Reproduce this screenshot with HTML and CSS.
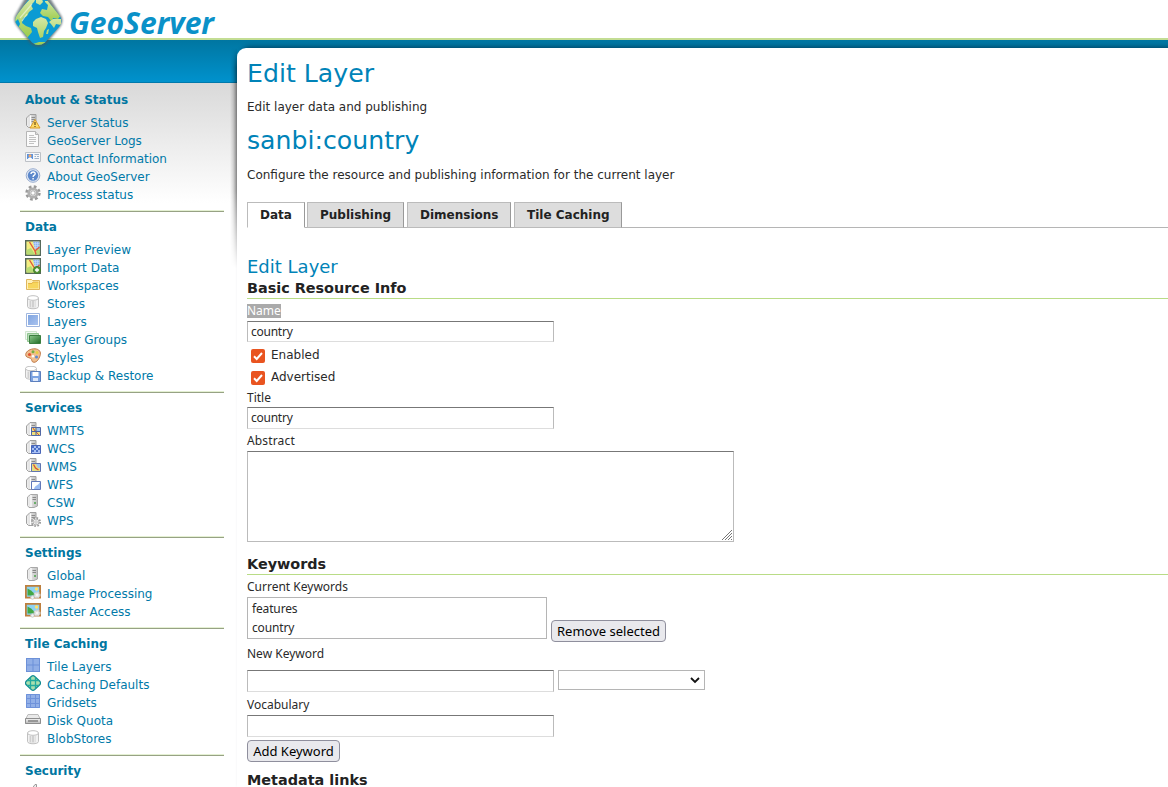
FILE: index.html
```html
<!DOCTYPE html>
<html lang="en">
<head>
<meta charset="utf-8">
<title>GeoServer: Edit Layer</title>
<link rel="stylesheet" href="styles.css">
</head>
<body>
<svg class="defs" width="0" height="0" aria-hidden="true">
  <defs>
    <linearGradient id="steel"><stop offset="0" stop-color="#f0f0f0"/><stop offset="1" stop-color="#c2c2c2"/></linearGradient>
    <linearGradient id="blue" x2="1" y2="1"><stop offset="0" stop-color="#7fa4e0"/><stop offset="1" stop-color="#a9c3ef"/></linearGradient>
    <linearGradient id="green" x2="1" y2="1"><stop offset="0" stop-color="#8cc98c"/><stop offset="1" stop-color="#1f6b25"/></linearGradient>
    <linearGradient id="silver" x2="0" y2="1"><stop offset="0" stop-color="#f4f4f4"/><stop offset="1" stop-color="#b8b8b8"/></linearGradient>
    <linearGradient id="land" x2="0" y2="1"><stop offset="0" stop-color="#d5e8a6"/><stop offset="1" stop-color="#9bcb4b"/></linearGradient>
    <symbol id="server" viewBox="0 0 16 16"><path d="M1.500 4 5 .500h6v11L8 13.500H3.500l-2-2z" fill="url(#steel)" stroke="#a0a0a0"/><path d="M5.500 1.500v11.500" stroke="#fff" stroke-width="1.200"/><path d="M6.500 3.500H10M6.500 5.500H10M6.500 7.500H10" stroke="#8d8d8d"/></symbol>
    <symbol id="server-status" viewBox="0 0 16 16"><use href="#server"/><path d="m10 5.500 5 8.500H5z" fill="#ffdc69" stroke="#d99c2b" stroke-linejoin="round"/><path d="M10 8v3M10 12v1" stroke="#6b4a12" stroke-width="1.200"/></symbol>
    <symbol id="page" viewBox="0 0 16 16"><path d="M1.500.5h9l3 3v12h-12z" fill="#fbfbfb" stroke="#b5b5b5"/><path d="M10.500.5v3h3" fill="#ddd" stroke="#b5b5b5"/><path d="M4 4.500h5M4 6.500h7M4 8.500h7M4 10.500h7M4 12.500h5" stroke="#c2c2c2"/></symbol>
    <symbol id="card" viewBox="0 0 16 16"><path d="M.5 3.500h15v9H.5z" fill="#f5f7fa" stroke="#bdc1c6"/><path d="M2 5h6v5H2z" fill="#5b93dd"/><circle cx="5" cy="6.800" r="1.500" fill="#f4a868"/><path d="M3 10c0-2 4-2 4 0z" fill="#fff"/><path d="M9.500 5.500H14M9.500 7.500H11M12 7.500h2M9.500 9.500H14" stroke="#9fb3c9"/></symbol>
    <symbol id="help" viewBox="0 0 16 16"><circle cx="8" cy="7.500" r="6.800" fill="#dce5f3" stroke="#9aaed0"/><circle cx="8" cy="7.500" r="5.200" fill="#5c88cb"/><path d="M6 6c0-3 4.500-2.500 4.200 0C10 7.300 8.100 7 8.100 9M8.100 10v1.500" fill="none" stroke="#fff" stroke-width="1.400"/></symbol>
    <symbol id="gear" viewBox="0 0 16 16"><circle cx="8" cy="8" r="6.200" fill="none" stroke="#999" stroke-width="3" stroke-dasharray="2.600 2.270"/><circle cx="8" cy="8" r="4.300" fill="#eee" stroke="#b0b0b0" stroke-width="2.600"/><circle cx="8" cy="8" r="2.200" fill="#fff" stroke="#999" stroke-width=".8"/></symbol>
    <symbol id="map" viewBox="0 0 16 16"><path d="M.7.700h14.600v14.600H.7z" fill="#f3ee82" stroke="#56695b" stroke-width="1.400"/><path d="M8 1.500h6.500v8H10z" fill="#8db4ee"/><path d="M1.500 10 6 8l4 6.500H1.500zM10 11l4.500-2v5.500H11z" fill="#b8dc73"/><path d="M10.500 2v7M12.500 2v7M8 3.500h6.500M9 5.500h5.500M9 7.500h5.500" stroke="#c6dafa" stroke-width=".6"/><path d="m4.500 2 5.500 9 1 3.500M10 11l4.500-4" fill="none" stroke="#e05a3c" stroke-width="1.400"/></symbol>
    <symbol id="map-add" viewBox="0 0 16 16"><use href="#map"/><circle cx="12" cy="12" r="3.500" fill="#5d9b3c" stroke="#3f7b2b"/><path d="M12 10v4M10 12h4" stroke="#fff" stroke-width="1.300"/></symbol>
    <symbol id="folder" viewBox="0 0 16 16"><path d="M1.500 12.500v-10h5l1 1h7v9z" fill="#fff1b8" stroke="#dfb65c"/><path d="M3 11.500v-5h4l1-1.500h5.500v6.500z" fill="#f7d65c"/><path d="M3 6.500h4L8 5h5.500" fill="none" stroke="#e0a93a" stroke-width=".8"/></symbol>
    <symbol id="store" viewBox="0 0 16 16"><path d="M2.500 3v8.500c0 3 11 3 11 0V3" fill="#f2f2f2" stroke="#c0c0c0"/><ellipse cx="8" cy="3" rx="5.500" ry="2.300" fill="#fff" stroke="#c0c0c0"/><path d="M4.500 6v6.500h6V6z" fill="#d0d0d0"/><path d="M6.500 6v7M9.500 6v7" stroke="#e7e7e7"/></symbol>
    <symbol id="layer" viewBox="0 0 16 16"><path d="M1.500.5h13v13h-13z" fill="#fff" stroke="#9fb6df"/><path d="M3 2h10v10H3z" fill="url(#blue)"/></symbol>
    <symbol id="group" viewBox="0 0 16 16"><path d="M.5.500h11v8H.5z" fill="#f1f8f1" stroke="#cfe5cf"/><path d="M2.500 2.500h11v8h-11z" fill="#b8dcb8" stroke="#8fc48f"/><path d="M4.500 4.500h11v8h-11z" fill="url(#green)" stroke="#3c7f40"/></symbol>
    <symbol id="palette" viewBox="0 0 16 16"><path d="M.7 6.500C1 3 5.500.7 10 .8c4 .3 6.500 3 5 7-1 3-3 6.500-6 6.500s-1.500-3-3.500-4S.5 9.500.7 6.500z" fill="#f0bf8e" stroke="#c07b4b"/><circle cx="4.500" cy="6.500" r="1.600" fill="#e5542f"/><circle cx="8" cy="3.800" r="1.500" fill="#75b044"/><circle cx="12" cy="4.500" r="1.500" fill="#e9cf42"/><circle cx="11.500" cy="9" r="1.500" fill="#5d8ad0"/><circle cx="8" cy="8.300" r="1.200" fill="#fff"/></symbol>
    <symbol id="backup" viewBox="0 0 16 16"><use href="#store" x="-2" y="-.5"/><path d="M5.500 5.500h10v10h-10z" fill="#7ba3e2" stroke="#5c7fbd"/><path d="M7.500 6h6v4h-6z" fill="#fff"/><path d="M8 12h5v3H8z" fill="#dce7fa"/></symbol>
    <symbol id="wmts" viewBox="0 0 16 16"><use href="#server"/><path d="M6.500 5.500h9v8h-9z" fill="#f0df7a" stroke="#5268a5"/><path d="M11.500 6h3.500v3h-3.500z" fill="#9fc1ef"/><path d="m8 6 2 3 4 4" stroke="#e05a3c"/><path d="M11 6v7M7 9.500h8" stroke="#4862a0"/></symbol>
    <symbol id="wcs" viewBox="0 0 16 16"><use href="#server"/><path d="M6.500 5.500h9v8h-9z" fill="#a9c1f3" stroke="#4a66b8"/><path d="M7 6h2v2H7zM11 6h2v2h-2zM9 8h2v2H9zM13 8h2v2h-2zM7 10h2v2H7zM11 10h2v2h-2z" fill="#4c70c8"/></symbol>
    <symbol id="wms" viewBox="0 0 16 16"><use href="#server"/><path d="M6.500 5.500h9v8h-9z" fill="#e6df80" stroke="#6175b0"/><path d="M11 6h4v4h-2z" fill="#9fc1ef"/><path d="m8.500 6.500 2 3.500 3 2" fill="none" stroke="#dc4d32" stroke-width="1.300"/></symbol>
    <symbol id="wfs" viewBox="0 0 16 16"><use href="#server"/><path d="M6.500 5.500h9v8h-9z" fill="#fff" stroke="#6279b9"/><path d="M15 6v7H9c1-4 4-3 6-7z" fill="#9bbcf2"/></symbol>
    <symbol id="tower" viewBox="0 0 16 16"><path d="M2.500 3 5.500.500h7v11.500L9 13.500H4l-1.500-2z" fill="url(#steel)" stroke="#a8a8a8"/><path d="M6 1v12" stroke="#fff" stroke-width="1.200"/><path d="M7.500 3.500H11M7.500 5.500H11" stroke="#888"/><circle cx="10" cy="9" r="1" fill="#48a548"/></symbol>
    <symbol id="wps" viewBox="0 0 16 16"><use href="#server"/><circle cx="11" cy="10" r="4" fill="#fff" stroke="#999" stroke-width="2" stroke-dasharray="1.600 1.540"/><circle cx="11" cy="10" r="3" fill="#eee" stroke="#b3b3b3"/><circle cx="11" cy="10" r="1.200" fill="#fff" stroke="#aaa" stroke-width=".7"/></symbol>
    <symbol id="image" viewBox="0 0 16 16"><path d="M.9.900h14.200v11.700H.9z" fill="#8fd2f2" stroke="#bd7f3e" stroke-width="1.800"/><path d="M2.500 3.500V10.500h9L6 5.500z" fill="#42a745"/><circle cx="11.500" cy="4" r="1.700" fill="#ffe269"/><circle cx="12" cy="10" r="2.600" fill="#f4f4f4" stroke="#d0d0d0" stroke-width="2" stroke-dasharray="1.500 .6"/><circle cx="7.500" cy="12.500" r="1.700" fill="#f4f4f4" stroke="#ccc"/></symbol>
    <symbol id="tiles" viewBox="0 0 16 16"><path d="M1 0h14v14H1z" fill="#6d91d8"/><path d="M2 1h5.500v5.500H2zM8.500 1H14v5.500H8.500zM2 7.500h5.500V13H2zM8.500 7.500H14V13H8.500z" fill="#91afe7"/></symbol>
    <symbol id="caching" viewBox="0 0 16 16"><path d="M6.500 1.200q1.500-1 3 0L15 6.500q1 1.500 0 3L9.500 14.800q-1.500 1-3 0L1 9.500q-1-1.500 0-3z" fill="#a9dfae" stroke="#118b92" stroke-width="1.300"/><path d="M5.500 2.500v11M10.500 2.500v11M2 5.500h12M2 10.500h12" stroke="#21aa9f" stroke-width="1.300"/></symbol>
    <symbol id="grid" viewBox="0 0 16 16"><path d="M1 0h14v14H1z" fill="#91afe7"/><path d="M5.500 0v14M10.500 0v14M1 4.500h14M1 9.500h14M1.500.500h13v13h-13z" fill="none" stroke="#6f92da"/></symbol>
    <symbol id="disk" viewBox="0 0 16 16"><path d="M3 2.500h10l2.500 5v4H.5v-4z" fill="#e9e9e9" stroke="#bbb"/><path d="M.5 6.500h15v5H.5z" fill="url(#silver)" stroke="#8e8e8e"/><path d="M3 9h10" stroke="#888" stroke-width="1.600"/></symbol>
    <symbol id="key" viewBox="0 0 16 16"><path d="M7.500 8V4L10 .500h1.500V8z" fill="#eee" stroke="#999"/></symbol>
  </defs>
</svg>

<header class="header">
  <div class="brand">
    <svg class="globe" width="70" height="50" viewBox="0 0 70 50" aria-hidden="true">
      <defs>
        <clipPath id="globe-clip"><path d="M28 0 17 15q-4 6 1 11l14 16.500q6 5 13 0l14-15.500q5-6 0-12L47 0z"/></clipPath>
        <filter id="soft" x="-20%" y="-20%" width="140%" height="140%"><feGaussianBlur stdDeviation="1.100"/></filter>
      </defs>
      <path d="M25-2 16 14q-4 6 1 12l14 18q7 5 15 0l14-17q5-7 0-13L50-2z" fill="#4c5a5e" opacity=".75" filter="url(#soft)"/>
      <g clip-path="url(#globe-clip)">
        <path d="M10-2h54v50H10z" fill="#0b9bd3"/>
        <path d="M14 16 31-2h5l-2 4-3 3 2 4-4 3-2 4-4 2-1 5 4 3 5 2 1 4-5 6-5-2-8-10z" fill="url(#land)"/>
        <path d="m20 18 12-14M22 21l5-7" stroke="#eef5dc" stroke-width="1.200" opacity=".7"/>
        <path d="m36-1 6 0 1 3-3 3-4-2zM45 1h5l11 14-3 4-5-1-1 4-4-5-5-1-3-3 2-4 5 1 1-5-3-3z" fill="url(#land)"/>
        <path d="m36 19 5-2 5 2 2 4-2 5-2 3-1 6-3 1-2-6-1-4-4-2v-4zM49 22l4-3 8 0v6l-5-1-2 4-3-4zM33 44l6-2 7 0-5 5zM47 30l2-1-1 5-2 0z" fill="url(#land)"/>
        <path d="m15 22 3-3 2 5-2 4z" fill="#0b9bd3"/>
      </g>
    </svg>
    <svg class="wordmark" width="152" height="40" viewBox="0 0 152 40"><text class="wordmark-text" x="-1" y="33.500" textLength="145" lengthAdjust="spacingAndGlyphs">GeoServer</text></svg>
  </div>
  <div class="band"></div>
</header>

<div class="body">
  <nav class="sidebar">
    <section class="menu"><h4>About &amp; Status</h4><ul>
      <li><svg class="down"><use href="#server-status"/></svg><a>Server Status</a></li>
      <li><svg><use href="#page"/></svg><a>GeoServer Logs</a></li>
      <li><svg><use href="#card"/></svg><a>Contact Information</a></li>
      <li><svg class="down"><use href="#help"/></svg><a>About GeoServer</a></li>
      <li><svg><use href="#gear"/></svg><a>Process status</a></li></ul></section>
    <section class="menu"><h4>Data</h4><ul>
      <li><svg><use href="#map"/></svg><a>Layer Preview</a></li>
      <li><svg><use href="#map-add"/></svg><a>Import Data</a></li>
      <li><svg class="down"><use href="#folder"/></svg><a>Workspaces</a></li>
      <li><svg class="down"><use href="#store"/></svg><a>Stores</a></li>
      <li><svg class="down"><use href="#layer"/></svg><a>Layers</a></li>
      <li><svg class="down"><use href="#group"/></svg><a>Layer Groups</a></li>
      <li><svg><use href="#palette"/></svg><a>Styles</a></li>
      <li><svg><use href="#backup"/></svg><a>Backup &amp; Restore</a></li></ul></section>
    <section class="menu"><h4>Services</h4><ul>
      <li><svg class="down"><use href="#wmts"/></svg><a>WMTS</a></li>
      <li><svg class="down"><use href="#wcs"/></svg><a>WCS</a></li>
      <li><svg class="down"><use href="#wms"/></svg><a>WMS</a></li>
      <li><svg class="down"><use href="#wfs"/></svg><a>WFS</a></li>
      <li><svg class="down"><use href="#tower"/></svg><a>CSW</a></li>
      <li><svg class="down"><use href="#wps"/></svg><a>WPS</a></li></ul></section>
    <section class="menu"><h4>Settings</h4><ul>
      <li><svg class="down"><use href="#tower"/></svg><a>Global</a></li>
      <li><svg class="down"><use href="#image"/></svg><a>Image Processing</a></li>
      <li><svg class="down"><use href="#image"/></svg><a>Raster Access</a></li></ul></section>
    <section class="menu"><h4>Tile Caching</h4><ul>
      <li><svg class="down"><use href="#tiles"/></svg><a>Tile Layers</a></li>
      <li><svg><use href="#caching"/></svg><a>Caching Defaults</a></li>
      <li><svg class="down"><use href="#grid"/></svg><a>Gridsets</a></li>
      <li><svg class="down"><use href="#disk"/></svg><a>Disk Quota</a></li>
      <li><svg class="down"><use href="#store"/></svg><a>BlobStores</a></li></ul></section>
    <section class="menu"><h4>Security</h4><ul>
      <li><svg><use href="#key"/></svg></li></ul></section>
  </nav>

  <main class="page">
    <h1>Edit Layer</h1>
    <p>Edit layer data and publishing</p>
    <h1>sanbi:country</h1>
    <p class="intro">Configure the resource and publishing information for the current layer</p>
    <div class="tabs">
      <a class="tab tab-data active">Data</a><a class="tab tab-pub">Publishing</a><a class="tab tab-dim">Dimensions</a><a class="tab tab-tile">Tile Caching</a>
    </div>
    <h2>Edit Layer</h2>
    <h3>Basic Resource Info</h3>
    <div class="label"><span class="selected">Name</span></div>
    <div class="field">country</div>
    <div class="checks">
      <div class="check"><svg class="tick" viewBox="0 0 14 14"><rect width="14" height="14" rx="2" fill="#e95420"/><path d="m3 7.300 2.700 2.700L11 4" fill="none" stroke="#fff" stroke-width="2"/></svg>Enabled</div>
      <div class="check"><svg class="tick" viewBox="0 0 14 14"><rect width="14" height="14" rx="2" fill="#e95420"/><path d="m3 7.300 2.700 2.700L11 4" fill="none" stroke="#fff" stroke-width="2"/></svg>Advertised</div>
    </div>
    <div class="label label-title">Title</div>
    <div class="field tall">country</div>
    <div class="label label-abstract">Abstract</div>
    <div class="area"><svg width="12" height="12" viewBox="0 0 12 12"><path d="M1 11 11 1M4 11l7-7M7 11l4-4M10 11l1-1" stroke="#777" stroke-width="1"/></svg></div>
    <h3 class="keywords">Keywords</h3>
    <div class="label">Current Keywords</div>
    <div class="row current"><div class="list"><div>features</div><div>country</div></div><span class="button remove">Remove selected</span></div>
    <div class="label label-new">New Keyword</div>
    <div class="row new"><div class="field tall"></div><div class="select"><svg width="10" height="8" viewBox="0 0 10 8"><path d="m1 2 4 4 4-4" fill="none" stroke="#111" stroke-width="1.800"/></svg></div></div>
    <div class="label label-voc">Vocabulary</div>
    <div class="field tall"></div>
    <span class="button add">Add Keyword</span>
    <h3 class="metadata">Metadata links</h3>
  </main>
</div>
</body>
</html>
```
FILE: styles.css
```css
* { box-sizing: border-box; }
body { margin: 0; height: 787px; overflow: hidden; background: #fff; color: #2a2a2a; font: 12px/18px "DejaVu Sans", sans-serif; }
h1, h2, h3, h4, p, ul { margin: 0; padding: 0; }
.defs { position: absolute; }

.header { height: 83px; }
.brand { position: relative; z-index: 2; display: flex; height: 38px; }
.brand svg { flex: none; overflow: visible; }
.wordmark-text { font: italic 700 31px "Open Sans", sans-serif; fill: #0a91c8; }
.band { height: 45px; border-top: 2px solid #c3dd94; border-bottom: 1px solid #0079ab; background: linear-gradient(#0076a1, #0092cd); }

.body { display: flex; height: 704px; }
.sidebar { flex: none; width: 237px; padding: 2px 13px 0 20px; background: linear-gradient(#d9d9d9, #fff 120px); }
.menu { padding-bottom: 8px; border-bottom: 1px solid #97a284; box-shadow: inset 0 -1px #e4f0d2; }
.menu h4 { height: 28px; padding: 0 5px; font-size: 12px; line-height: 30px; color: #0076a1; }
.menu ul { list-style: none; }
.menu li { display: flex; gap: 6px; height: 18px; padding-left: 5px; line-height: 20px; color: #0079a8; }
.menu li svg { flex: none; width: 16px; height: 16px; }
.menu li .down { margin-top: 1px; }

.page { position: relative; z-index: 1; flex: 1; min-width: 0; height: 739px; margin-top: -35px; padding-left: 10px; border-top-left-radius: 9px; background: #fff; box-shadow: 4px -1px 5px rgba(0, 30, 50, .65); }
.page::before { content: ""; position: absolute; left: -7px; top: 0; width: 7px; height: 220px; background: linear-gradient(to left, rgba(0, 0, 0, .45), rgba(0, 0, 0, .12) 55%, transparent); -webkit-mask-image: linear-gradient(transparent, #000 9%, #000 65%, transparent); mask-image: linear-gradient(transparent, #000 9%, #000 65%, transparent); }
h1 { height: 50px; font-size: 25.200px; font-weight: 400; line-height: 52px; color: #0083b8; }
p { height: 17px; line-height: 18px; }
.intro { height: 18px; line-height: 20px; }
.tabs { display: flex; height: 26px; margin-top: 19px; border-bottom: 1px solid #b5b5b5; }
.tab { height: 26px; padding-left: 12px; border: 1px solid #bbb; border-right-color: #999; background: #ddd; color: #222; font-weight: 700; line-height: 24px; }
.active { border-bottom-color: #fff; background: #fff; }
.tab-data { width: 58px; }
.tab-pub { width: 97px; margin-left: 2px; }
.tab-dim { width: 104px; margin-left: 3px; }
.tab-tile { width: 108px; margin-left: 3px; }
h2 { height: 22px; margin-top: 28px; font-size: 18px; font-weight: 400; line-height: 22px; color: #0083b8; }
h3 { height: 21px; border-bottom: 1px solid #b9dc86; color: #222; font-size: 14.400px; line-height: 20px; }
.label { height: 22px; font: 12px/23px "Noto Sans", sans-serif; }
.label-abstract { letter-spacing: .150px; }
.selected { display: inline-block; height: 14px; line-height: 14px; background: #aaa; color: #fff; }
.field { width: 307px; height: 21px; padding-left: 3px; border: 1px solid #bbb; border-top-color: #777; border-bottom-color: #ddd; font: 12px/19px "Noto Sans", sans-serif; letter-spacing: -.250px; }
.tall { height: 22px; line-height: 20px; }
.checks { padding: 2px 0 0 4px; }
.check { display: flex; gap: 6px; height: 22px; line-height: 22px; }
.tick { width: 14px; height: 14px; margin-top: 5px; }
.label-title { height: 19px; line-height: 20px; }
.area { display: flex; align-items: flex-end; justify-content: flex-end; width: 487px; height: 91px; border: 1px solid #bbb; border-top-color: #777; }
.keywords { margin-top: 12px; }
.row { display: flex; gap: 4px; }
.current { height: 45px; align-items: flex-end; }
.list { align-self: flex-start; width: 300px; height: 42px; padding: 1px 4px; border: 1px solid #b5b5b5; font: 12px/19px "Noto Sans", sans-serif; letter-spacing: -.150px; }
.button { display: block; height: 22px; border: 1px solid #8f8f9d; border-radius: 4px; background: #e9e9ed; color: #000; text-align: center; font: 13px/20px "Noto Sans", sans-serif; }
.remove { width: 115px; }
.add { width: 93px; margin-top: 3px; }
.label-new { height: 28px; }
.select { display: flex; align-items: center; justify-content: flex-end; width: 147px; height: 20px; padding-right: 4px; border: 1px solid #b5b5b5; }
.label-voc { height: 23px; line-height: 25px; }
.metadata { margin-top: 8px; }
```
